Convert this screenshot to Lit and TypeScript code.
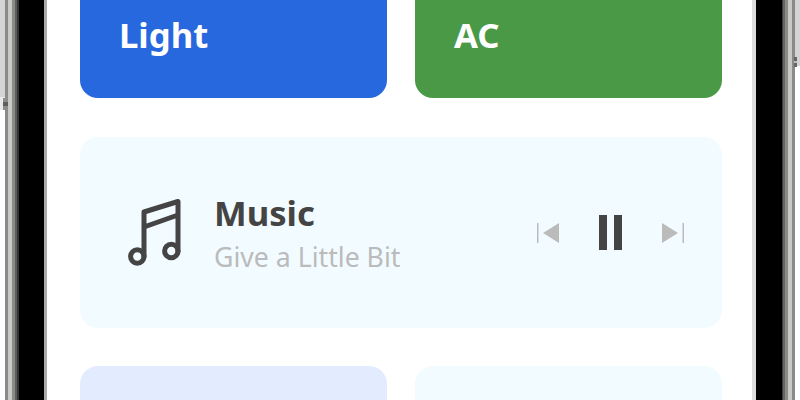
import { LitElement, html, css } from "lit";
import { customElement } from "lit/decorators.js";

@customElement("app-root")
export class AppRoot extends LitElement {
  static styles = css`
    :host { display: block; width: 800px; height: 400px; overflow: hidden; font-family: "Noto Sans", sans-serif; }
    .bg { width: 800px; height: 400px; background: #fff; display: grid; grid-template-columns: 19px 28px 1fr 30px 18px; position: relative; }
    .frameL { background: linear-gradient(90deg, #8a8a8a 0 3px, #c9c9c5 3px 7px, #8a8a88 7px 10px, #5c5c5a 10px 12px, #333 12px 14px); background-position: 5px 0; background-repeat: no-repeat; background-size: 14px 100%; }
    .frameR { background: linear-gradient(90deg, #3a3a3a 0 1px, #666 1px 3px, #8a8a88 3px 6px, #c9c9c5 6px 10px, #8a8a8a 10px 13px); background-repeat: no-repeat; background-size: 13px 100%; }
    .edgeL { position: absolute; left: 0; top: 0; width: 5px; height: 110px; background: linear-gradient(180deg, #d4d4d4 0 97px, #e8e8e8 97px); }
    .edgeR { position: absolute; right: 0; top: 0; width: 5px; height: 66px; background: #d4d4d4; }
    .btnL { position: absolute; left: 3px; top: 98px; width: 5px; height: 12px; background: linear-gradient(180deg, #8c8c8c 0 4px, #5e5e5e 4px 8px, #8c8c8c 8px); }
    .btnR { position: absolute; left: 794px; top: 57px; width: 3px; height: 10px; background: linear-gradient(180deg, #666 0 4px, #bbb 4px 6px, #666 6px); }
    .bezelL { background: #000; border-right: 3px solid #aaa; box-sizing: border-box; }
    .bezelR { background: #000; border-left: 4px solid #ddd; box-sizing: border-box; }
    .screen { padding-left: 33px; display: flex; flex-direction: column; gap: 38px; margin-top: -30px; }
    .row { display: grid; grid-template-columns: 307px 307px; gap: 28px; }
    .top { margin-bottom: 1px; }
    .tile { height: 128px; border-radius: 18px; box-sizing: border-box; padding: 0 39px 23px; color: #fff; font-size: 34.67px; font-weight: 700; display: flex; align-items: flex-end; line-height: 80px; }
    .blue { background: #2768de; }
    .green { background: #4a9947; }
    .music { height: 191px; border-radius: 18px; background: #f2fbff; display: flex; align-items: center; padding: 0 38px 0 48px; width: 642px; box-sizing: border-box; }
    .info { margin-left: 30px; flex: 1; display: flex; flex-direction: column; gap: 2px; padding-top: 2px; }
    .title { font-size: 34.67px; font-weight: 700; color: #444; line-height: 44px; }
    .sub { font-size: 26.67px; color: #bbb; line-height: 40px; }
    .controls { display: flex; align-items: center; gap: 40px; }
    svg { display: block; }
    .a { background: #e3ecff; }
    .b { background: #f2fbff; }
    .low { height: 60px; }
  `;
  render() {
    return html`<div class="bg">
      <div class="frameL"></div><div class="bezelL"></div>
      <div class="screen">
        <div class="row top"><div class="tile blue">Light</div><div class="tile green">AC</div></div>
        <div class="music">
          <svg width="56" height="72" viewBox="0 0 56 72" fill="none" stroke="#444" stroke-width="5" stroke-linejoin="round" stroke-linecap="round">
            <circle cx="9.3" cy="59.5" r="6.7"/><circle cx="43.3" cy="54" r="6.7"/>
            <path d="M16 59.5V15L50 4.5V54M16 30L50 18"/>
          </svg>
          <div class="info"><div class="title">Music</div><div class="sub">Give a Little Bit</div></div>
          <div class="controls">
            <svg width="22" height="20" viewBox="0 0 22 20"><rect x="0" y="0" width="1.5" height="20" fill="#bbb"/><path d="M22 0V20L6 10Z" fill="#bbb"/></svg>
            <svg width="23" height="35" viewBox="0 0 23 35"><rect width="8" height="35" fill="#444"/><rect x="15" width="8" height="35" fill="#444"/></svg>
            <svg width="22" height="20" viewBox="0 0 22 20"><rect x="20.5" y="0" width="1.5" height="20" fill="#bbb"/><path d="M0 0V20L16 10Z" fill="#bbb"/></svg>
          </div>
        </div>
        <div class="row"><div class="tile a low"></div><div class="tile b low"></div></div>
      </div>
      <div class="bezelR"></div><div class="frameR"></div>
      <div class="edgeL"></div><div class="edgeR"></div><div class="btnL"></div><div class="btnR"></div>
    </div>`;
  }
}
